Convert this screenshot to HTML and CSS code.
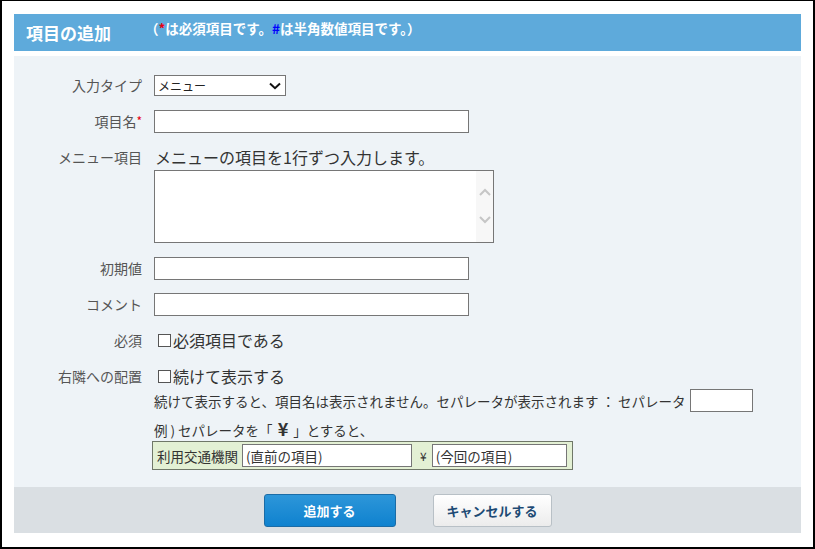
FILE: index.html
```html
<!DOCTYPE html>
<html lang="ja">
<head>
    <meta charset="UTF-8">
    <title>項目の追加</title>
    <link rel="stylesheet" href="styles.css">
</head>
<body>
    <div class="frame">
        <div class="head">
            <h1>項目の追加</h1>
            <p class="note">（<span class="mark-req">*</span>は必須項目です。<span class="mark-num">#</span>は半角数値項目です。）</p>
        </div>

        <div class="panel">
            <div class="row row-first">
                <label class="row-label" for="type">入力タイプ</label>
                <div class="select-wrap">
                    <select id="type" class="select">
                        <option>メニュー</option>
                    </select>
                    <svg class="chevron" width="12" height="8" viewBox="0 0 12 8"><path d="M1 1.5 L6 6.2 L11 1.5" fill="none" stroke="#111" stroke-width="2"/></svg>
                </div>
            </div>

            <div class="row">
                <label class="row-label" for="name">項目名<span class="mark-req">*</span></label>
                <input type="text" id="name" class="text">
            </div>

            <div class="row row-menu">
                <label class="row-label" for="menu">メニュー項目</label>
                <div class="field">
                    <p class="hint">メニューの項目を1行ずつ入力します。</p>
                    <div class="area">
                        <textarea id="menu"></textarea>
                        <div class="area-bar">
                            <svg width="12" height="8" viewBox="0 0 12 8"><path d="M1 7 L6 2 L11 7" fill="none" stroke="#c6c6c6" stroke-width="2"/></svg>
                            <svg width="12" height="8" viewBox="0 0 12 8"><path d="M1 1 L6 6 L11 1" fill="none" stroke="#c6c6c6" stroke-width="2"/></svg>
                        </div>
                    </div>
                </div>
            </div>

            <div class="row">
                <label class="row-label" for="init">初期値</label>
                <input type="text" id="init" class="text">
            </div>

            <div class="row row-comment">
                <label class="row-label" for="comment">コメント</label>
                <input type="text" id="comment" class="text">
            </div>

            <div class="row row-check">
                <span class="row-label">必須</span>
                <label class="check"><input type="checkbox">必須項目である</label>
            </div>

            <div class="row row-next">
                <span class="row-label">右隣への配置</span>
                <div class="field">
                    <label class="check"><input type="checkbox">続けて表示する</label>
                    <div class="sep-line">
                        <span>続けて表示すると、項目名は表示されません。セパレータが表示されます ： セパレータ</span>
                        <input type="text" class="sep">
                    </div>
                    <div class="example">例 ) セパレータを「<b class="yen">¥</b>」とすると、</div>
                    <div class="sample">
                        <span class="sample-label">利用交通機関</span>
                        <input type="text" class="sample-prev" value="(直前の項目)">
                        <span class="sample-sep">¥</span>
                        <input type="text" class="sample-cur" value="(今回の項目)">
                    </div>
                </div>
            </div>
        </div>

        <div class="foot">
            <a class="btn btn-add">追加する</a>
            <a class="btn btn-cancel">キャンセルする</a>
        </div>
    </div>
</body>
</html>
```

FILE: styles.css
```css
body {
    margin: 0;
    font-family: "Noto Sans CJK JP", "Noto Sans", sans-serif;
    color: #333;
    background-color: #fff;
}

.frame {
    width: 815px;
    height: 549px;
    box-sizing: border-box;
    border: 2px solid #000;
    border-top-width: 1px;
    padding: 13px 12px 14px;
}

/* ヘッダー */
.head {
    display: flex;
    align-items: flex-start;
    height: 37px;
    padding: 0 12px;
    background-color: #5eaadb;
    color: #fff;
}

.head h1 {
    margin: 0;
    font-size: 17px;
    font-weight: bold;
    line-height: 37px;
}

.head .note {
    margin: 0 0 0 34px;
    padding-top: 6px;
    font-size: 13.5px;
    font-weight: bold;
    line-height: 16px;
}

.mark-req {
    color: #e60012;
}

.mark-num {
    color: #0000ff;
}

/* 入力欄 */
.panel {
    margin-top: 5px;
    height: 431px;
    box-sizing: border-box;
    padding-top: 19px;
    background-color: #eef3f7;
}

.row {
    display: flex;
    align-items: flex-start;
    margin-top: 14px;
}

.row-first {
    margin-top: 0;
}

.row-label {
    flex: none;
    width: 128px;
    padding-right: 12px;
    text-align: right;
    font-size: 14px;
    line-height: 22px;
    color: #555;
}

.row-first .row-label {
    line-height: 20px;
}

.row-label .mark-req {
    font-size: 12px;
    vertical-align: top;
}

.row-menu {
    margin-top: 14px;
}

.row-menu .row-label {
    line-height: 20px;
}

.row-comment {
    margin-top: 13px;
}

.row-check {
    margin-top: 12px;
}

.row-check .row-label,
.row-next .row-label {
    line-height: 24px;
}

.row-next {
    margin-top: 12px;
}

.select-wrap {
    position: relative;
}

.select {
    display: block;
    appearance: none;
    width: 132px;
    height: 21px;
    margin: 0;
    padding: 0 0 0 3px;
    border: 1px solid #767676;
    border-radius: 0;
    background-color: #fff;
    font-family: inherit;
    font-size: 12px;
    color: #222;
}

.select-wrap .chevron {
    position: absolute;
    right: 5px;
    top: 7px;
    pointer-events: none;
}

.text {
    display: block;
    width: 315px;
    height: 23px;
    box-sizing: border-box;
    margin: 0;
    border: 1px solid #767676;
    background-color: #fff;
}

.hint {
    margin: 0;
    font-size: 16px;
    line-height: 20px;
    padding-left: 1px;
}

.area {
    display: flex;
    width: 340px;
    height: 73px;
    margin-top: 3px;
    box-sizing: border-box;
    border: 1px solid #767676;
    background-color: #fff;
}

.area textarea {
    flex: 1;
    margin: 0;
    border: none;
    resize: none;
    outline: none;
}

.area-bar {
    width: 17px;
    display: flex;
    flex-direction: column;
    align-items: center;
    gap: 20px;
    padding-top: 17px;
    box-sizing: border-box;
    background-color: #f7f7f7;
}

.check {
    display: flex;
    align-items: center;
    height: 24px;
    font-size: 16px;
    line-height: 24px;
    color: #333;
}

.check input {
    appearance: none;
    width: 13px;
    height: 13px;
    margin: 0 2px 0 4px;
    border: 1px solid #555;
    background-color: #fff;
}

.sep-line {
    display: flex;
    align-items: center;
    gap: 4px;
    height: 23px;
    margin-top: 1px;
    font-size: 13.5px;
    line-height: 22px;
}

.sep {
    display: block;
    width: 63px;
    height: 23px;
    box-sizing: border-box;
    margin: 0;
    border: 1px solid #767676;
}

.example {
    height: 20px;
    margin-top: 8px;
    font-size: 13.5px;
    line-height: 20px;
}

.example .yen {
    margin: 0 5px;
    font-size: 18px;
    line-height: 0;
}

.sample {
    display: flex;
    align-items: center;
    width: 421px;
    height: 29px;
    margin: 1px 0 0 -2px;
    box-sizing: border-box;
    border: 1px solid #6f7768;
    padding-left: 4px;
    background-color: #e3f0d4;
    font-size: 13.5px;
}

.sample input {
    display: block;
    flex: none;
    height: 23px;
    box-sizing: border-box;
    margin: 0;
    border: 1px solid #767676;
    padding: 0 3px;
    font-family: inherit;
    font-size: 13.5px;
    color: #333;
}

.sample-label {
    margin-right: 4px;
}

.sample-prev {
    width: 170px;
}

.sample-sep {
    margin: 0 5px 0 8px;
    font-size: 12px;
}

.sample-cur {
    width: 135px;
}

/* ボタン */
.foot {
    display: flex;
    justify-content: center;
    gap: 37px;
    height: 46px;
    padding-top: 7px;
    box-sizing: border-box;
    background-color: #dadfe3;
}

.btn {
    display: block;
    height: 33px;
    box-sizing: border-box;
    border-radius: 3px;
    font-size: 13px;
    font-weight: bold;
    line-height: 31px;
    text-align: center;
    text-decoration: none;
    cursor: pointer;
}

.btn-add {
    width: 132px;
    border: 1px solid #1b6ca6;
    background: linear-gradient(#2d96d9, #0f82cf);
    color: #fff;
}

.btn-cancel {
    width: 119px;
    border: 1px solid #b8c0c6;
    background: linear-gradient(#fff, #ececec);
    color: #1d4a74;
}
```
